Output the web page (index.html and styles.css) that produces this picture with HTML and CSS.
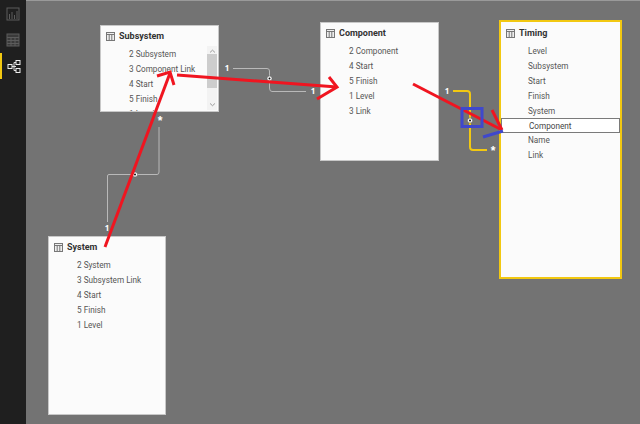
FILE: index.html
```html
<!DOCTYPE html>
<html lang="en">
<head>
    <meta charset="UTF-8">
    <title>Relationships</title>
    <link rel="stylesheet" href="styles.css">
</head>
<body>
    <div class="app">
        <!-- left nav -->
        <nav class="sidebar">
            <svg class="nav-icon" width="14" height="14" viewBox="0 0 14 14">
                <rect x="1" y="1" width="12" height="12" fill="none" stroke="#5c5c5c"/>
                <path d="M3.5 12V7M6 12V5M8.5 12V8M11 12V4" stroke="#5c5c5c" fill="none"/>
            </svg>
            <svg class="nav-icon" width="14" height="14" viewBox="0 0 14 14">
                <rect x="1" y="1" width="12" height="12" fill="#3a3a3a" stroke="#5c5c5c"/>
                <path d="M1 4.5H13M1 7.5H13M1 10.5H13M5 4.5V13M9 4.5V13" stroke="#5c5c5c" fill="none"/>
            </svg>
            <div class="nav-active">
                <svg width="14" height="14" viewBox="0 0 14 14">
                    <path d="M5 7.5H9M7 3.5V11.5M7 3.5H9M7 11.5H9" stroke="#ddd" fill="none"/>
                    <rect x="1" y="5.5" width="4" height="4" fill="none" stroke="#eee"/>
                    <rect x="9" y="1.5" width="4" height="4" fill="none" stroke="#eee"/>
                    <rect x="9" y="9.5" width="4" height="4" fill="none" stroke="#eee"/>
                </svg>
            </div>
        </nav>

        <!-- diagram canvas -->
        <main class="canvas">
            <div class="table-card card-subsystem">
                <div class="card-title">
                    <svg class="table-icon" width="9" height="9" viewBox="0 0 9 9"><rect x=".5" y=".5" width="8" height="8" fill="#eee" stroke="#777"/><path d="M.5 2.5H8.5M3.2 2.5V8.5M5.8 2.5V8.5" stroke="#777" fill="none"/></svg>
                    Subsystem
                </div>
                <ul class="fields">
                    <li>2 Subsystem</li>
                    <li>3 Component Link</li>
                    <li>4 Start</li>
                    <li>5 Finish</li>
                    <li>1 Level</li>
                </ul>
                <div class="scrollbar">
                    <svg width="7" height="5" viewBox="0 0 7 5"><path d="M1 3.5L3.5 1.2L6 3.5" fill="none" stroke="#999"/></svg>
                    <div class="scroll-thumb"></div>
                    <svg width="7" height="5" viewBox="0 0 7 5"><path d="M1 1.5L3.5 3.8L6 1.5" fill="none" stroke="#999"/></svg>
                </div>
            </div>

            <div class="table-card card-component">
                <div class="card-title">
                    <svg class="table-icon" width="9" height="9" viewBox="0 0 9 9"><rect x=".5" y=".5" width="8" height="8" fill="#eee" stroke="#777"/><path d="M.5 2.5H8.5M3.2 2.5V8.5M5.8 2.5V8.5" stroke="#777" fill="none"/></svg>
                    Component
                </div>
                <ul class="fields">
                    <li>2 Component</li>
                    <li>4 Start</li>
                    <li>5 Finish</li>
                    <li>1 Level</li>
                    <li>3 Link</li>
                </ul>
            </div>

            <div class="table-card card-timing">
                <div class="card-title">
                    <svg class="table-icon" width="9" height="9" viewBox="0 0 9 9"><rect x=".5" y=".5" width="8" height="8" fill="#eee" stroke="#777"/><path d="M.5 2.5H8.5M3.2 2.5V8.5M5.8 2.5V8.5" stroke="#777" fill="none"/></svg>
                    Timing
                </div>
                <ul class="fields">
                    <li>Level</li>
                    <li>Subsystem</li>
                    <li>Start</li>
                    <li>Finish</li>
                    <li>System</li>
                    <li class="selected">Component</li>
                    <li>Name</li>
                    <li>Link</li>
                </ul>
            </div>

            <div class="table-card card-system">
                <div class="card-title">
                    <svg class="table-icon" width="9" height="9" viewBox="0 0 9 9"><rect x=".5" y=".5" width="8" height="8" fill="#eee" stroke="#777"/><path d="M.5 2.5H8.5M3.2 2.5V8.5M5.8 2.5V8.5" stroke="#777" fill="none"/></svg>
                    System
                </div>
                <ul class="fields">
                    <li>2 System</li>
                    <li>3 Subsystem Link</li>
                    <li>4 Start</li>
                    <li>5 Finish</li>
                    <li>1 Level</li>
                </ul>
            </div>

            <!-- relationship lines and the red/blue markup drawn over them -->
            <svg class="overlay" width="640" height="424" viewBox="0 0 640 424">
                <g fill="none" stroke="#b9b9b9" stroke-width="1">
                    <path d="M233 68.5H267Q269.5 68.5 269.5 71V88Q269.5 91.5 272 91.5H306"/>
                    <path d="M107.5 222V176Q107.5 174.5 109 174.5H157Q159 174.5 159 172V127"/>
                </g>
                <path d="M453 91H467Q470 91 470 94V147Q470 150 473 150H487" fill="none" stroke="#f2c811" stroke-width="2"/>

                <g fill="#fff" font-family="'Open Sans', sans-serif" font-size="8" font-weight="700" text-anchor="middle">
                    <text x="227" y="71">1</text>
                    <text x="313" y="94">1</text>
                    <text x="107" y="231">1</text>
                    <text x="447" y="94">1</text>
                </g>
                <g fill="#fff" font-family="'Liberation Sans', sans-serif" font-size="12" font-weight="700" text-anchor="middle">
                    <text x="160" y="125">*</text>
                    <text x="493" y="155">*</text>
                </g>

                <g fill="#fff" stroke="#555" stroke-width=".5">
                    <circle cx="269.5" cy="78.5" r="2.5"/>
                    <circle cx="135" cy="174.5" r="2.5"/>
                    <circle cx="470" cy="120.5" r="2.5"/>
                </g>
                <g fill="#111">
                    <circle cx="269.5" cy="78.5" r="1"/>
                    <circle cx="135" cy="174.5" r="1"/>
                    <circle cx="470" cy="120.5" r="1"/>
                </g>

                <g fill="none" stroke="#f01520" stroke-width="3">
                    <path d="M105 247L170 73"/>
                    <path d="M157 76L170 72L174 85"/>
                    <path d="M177 75L337 87"/>
                    <path d="M329 77L337 87L317 99"/>
                    <path d="M413 84L502 130"/>
                    <path d="M492 110L502 130"/>
                </g>
                <rect x="462" y="108.5" width="20" height="18" fill="none" stroke="#3f48cc" stroke-width="3"/>
                <path d="M483 137L503 131" fill="none" stroke="#3f48cc" stroke-width="3"/>
            </svg>
        </main>
    </div>
</body>
</html>
```

FILE: styles.css
```css
/* page */
body {
    margin: 0;
    font-family: Roboto, "Liberation Sans", sans-serif;
    background-color: #737373;
}

.app {
    display: flex;
    width: 640px;
    height: 424px;
    overflow: hidden;
}

/* left nav */
.sidebar {
    width: 26px;
    flex-shrink: 0;
    display: flex;
    flex-direction: column;
    align-items: center;
    gap: 12px;
    padding-top: 7px;
    box-sizing: border-box;
    background-color: #1f1f1f;
}

.nav-icon {
    display: block;
}

.nav-active {
    width: 100%;
    height: 26px;
    margin-top: -6px;
    box-sizing: border-box;
    border-left: 2px solid #f2c811;
    display: flex;
    align-items: center;
    justify-content: center;
}

/* diagram canvas */
.canvas {
    flex: 1;
    background-color: #737373;
    border-top: 1px solid #9a9a9a;
    height: 423px;
}

.overlay {
    position: absolute;
    left: 0;
    top: 0;
    pointer-events: none;
}

/* table cards, placed freely on the canvas */
.table-card {
    position: absolute;
    box-sizing: border-box;
    overflow: hidden;
    background-color: #fbfbfb;
    border: 1px solid #c8c8c8;
}

.card-subsystem {
    left: 100px;
    top: 25px;
    width: 119px;
    height: 87px;
}

.card-component {
    left: 320px;
    top: 22px;
    width: 119px;
    height: 139px;
}

.card-timing {
    left: 499px;
    top: 20px;
    width: 123px;
    height: 259px;
    border: 2px solid #f2c811;
}

.card-system {
    left: 48px;
    top: 236px;
    width: 118px;
    height: 179px;
}

.card-title {
    display: flex;
    align-items: center;
    gap: 4px;
    height: 20px;
    padding-left: 5px;
    font-size: 9px;
    font-weight: 700;
    color: #333;
}

.table-icon {
    flex-shrink: 0;
}

.fields {
    list-style: none;
    margin: 0;
    padding: 1px 0 0;
}

.fields li {
    height: 15px;
    line-height: 15px;
    padding-left: 28px;
    font-size: 8.2px;
    color: #555;
    white-space: nowrap;
}

.card-timing .card-title {
    margin-top: 1px;
}

.card-timing .fields li {
    padding-left: 27px;
}

.fields li.selected {
    box-sizing: border-box;
    line-height: 14px;
    margin-top: -1px;
    border: 1px solid #7a7a7a;
    background-color: #fff;
    color: #444;
}

/* scrollbar on the Subsystem card */
.scrollbar {
    position: absolute;
    right: 1px;
    top: 20px;
    bottom: 1px;
    width: 10px;
    background-color: #f3f3f3;
    display: flex;
    flex-direction: column;
    align-items: center;
    justify-content: space-between;
    padding-top: 3px;
    padding-bottom: 3px;
    box-sizing: border-box;
}

.scroll-thumb {
    width: 100%;
    height: 35px;
    margin-bottom: 14px;
    background-color: #cdcdcd;
}
```
